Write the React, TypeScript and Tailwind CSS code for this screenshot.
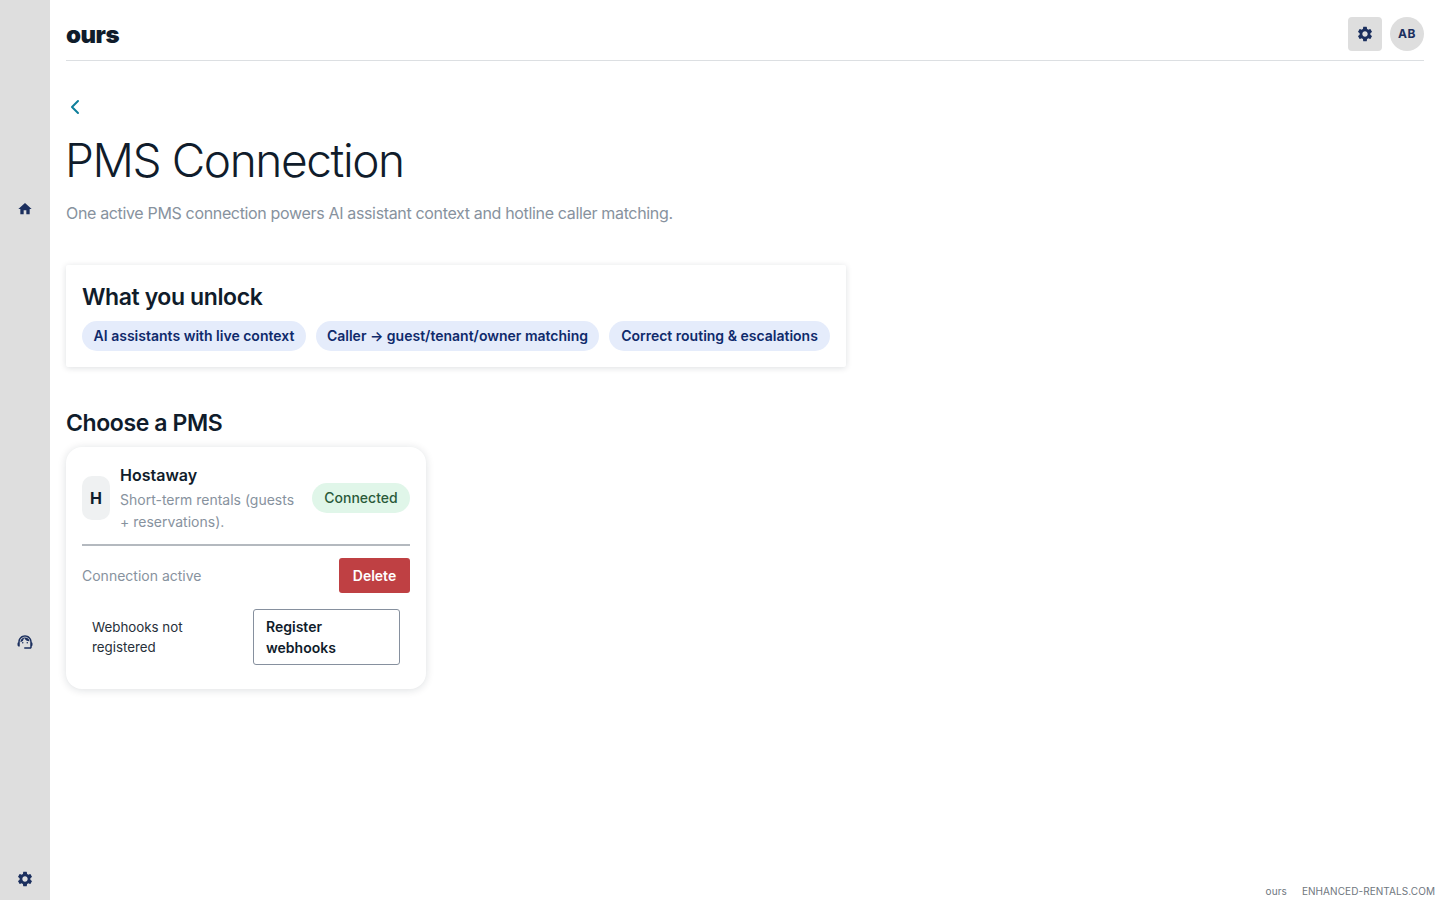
import React from "react";
import { ChevronLeft } from "lucide-react";
import { MdHome, MdSettings, MdSupportAgent } from "react-icons/md";

const chips = [
  { label: "AI assistants with live context", width: "w-[224px]" },
  { label: "Caller → guest/tenant/owner matching", width: "w-[283px]" },
  { label: "Correct routing & escalations", width: "w-[221px]" },
];

const Sidebar: React.FC = () => (
  <aside className="w-[50px] h-[900px] shrink-0 bg-[#dedede] flex flex-col items-center text-[#1b2f5e]">
    <div className="mt-[200px] h-[18px] flex items-center">
      <MdHome size={16} />
    </div>
    <div className="mt-[415px] h-[18px] flex items-center">
      <MdSupportAgent size={18} />
    </div>
    <div className="mt-auto mb-[12px] h-[18px] flex items-center">
      <MdSettings size={18} />
    </div>
  </aside>
);

export default function App() {
  return (
    <div
      className="flex h-[900px] overflow-hidden bg-white text-[#101c2b]"
      style={{ fontFamily: "Inter, sans-serif" }}
    >
      <Sidebar />
      <main className="flex-1 flex flex-col min-w-0">
        <div className="px-4 flex-1">
          <header className="h-[61px] border-b border-[#dcdfe2] flex items-end justify-between">
            <span className="text-[24px] leading-[36px] font-black tracking-[-0.5px] mb-[7px]">ours</span>
            <div className="flex items-center gap-2 mb-[9px]">
              <button className="w-[34px] h-[34px] rounded-[4px] bg-[#dedede] flex items-center justify-center text-[#1b2f5e]">
                <MdSettings size={18} />
              </button>
              <div className="w-[34px] h-[34px] rounded-full bg-[#dedede] flex items-center justify-center text-[12px] font-bold tracking-[0.5px] text-[#1b2f5e]">
                AB
              </div>
            </div>
          </header>

          <div className="mt-[34px] text-[#0e7f9b] h-[24px] -ml-[3px]">
            <ChevronLeft size={24} strokeWidth={2} />
          </div>

          <h1 className="mt-[13px] -ml-px text-[46px] leading-[56px] font-light tracking-[-1.4px]">PMS Connection</h1>
          <p className="mt-[13px] text-[16px] leading-[24px] tracking-[-0.34px] text-[#87929e]">
            One active PMS connection powers AI assistant context and hotline caller matching.
          </p>

          <section className="mt-[40px] w-[780px] h-[102px] rounded-[2px] bg-white shadow-[0_1px_6px_rgba(16,28,43,0.14)] px-4 pt-[16px]">
            <h2 className="text-[23px] leading-[32px] font-semibold tracking-[-0.4px]">What you unlock</h2>
            <div className="mt-[8px] flex gap-[10px]">
              {chips.map((chip) => (
                <span
                  key={chip.label}
                  className={`${chip.width} h-[30px] rounded-full bg-[#e5ecfb] pb-px flex items-center justify-center text-[14px] font-semibold text-[#0f2a6b] whitespace-nowrap`}
                >
                  {chip.label}
                </span>
              ))}
            </div>
          </section>

          <h2 className="mt-[40px] text-[23px] leading-[32px] font-semibold tracking-[-0.4px]">Choose a PMS</h2>

          <section className="mt-[8px] w-[360px] h-[242px] rounded-[16px] bg-white shadow-[0_1px_8px_rgba(16,28,43,0.14)] px-4 pt-[16px]">
            <div className="flex items-center border-b-2 border-[#b4b9bf] pb-[11px]">
              <div className="w-[28px] h-[44px] shrink-0 rounded-[10px] bg-[#eff1f2] flex items-center justify-center text-[16px] font-bold">
                H
              </div>
              <div className="ml-[10px] w-[182px] shrink-0">
                <div className="text-[16px] leading-[24px] font-semibold">Hostaway</div>
                <div className="mt-[2px] text-[14px] leading-[22px] text-[#87929e]">
                  Short-term rentals (guests + reservations).
                </div>
              </div>
              <span className="ml-auto w-[98px] h-[30px] pb-px rounded-full bg-[#e0f6e9] flex items-center justify-center text-[14px] font-medium text-[#2a5a3a]">
                Connected
              </span>
            </div>

            <div className="mt-[12px] flex items-center justify-between">
              <span className="text-[14px] text-[#87929e]">Connection active</span>
              <button className="w-[71px] h-[35px] rounded-[3px] bg-[#bf4043] text-white text-[14px] font-semibold">
                Delete
              </button>
            </div>

            <div className="mt-[16px] px-[10px] flex items-center justify-between">
              <span className="w-[120px] text-[13.33px] leading-[20px] text-[#27303a]">Webhooks not registered</span>
              <button className="w-[147px] h-[56px] rounded-[3px] border border-[#86909e] px-3 text-left text-[14px] leading-[21px] font-semibold">
                Register webhooks
              </button>
            </div>
          </section>
        </div>

        <footer className="h-[18px] pr-[5px] flex justify-end items-center gap-[15px] text-[10px] tracking-[0.08px] text-[#6f7780]">
          <span>ours</span>
          <span>ENHANCED-RENTALS.COM</span>
        </footer>
      </main>
    </div>
  );
}
